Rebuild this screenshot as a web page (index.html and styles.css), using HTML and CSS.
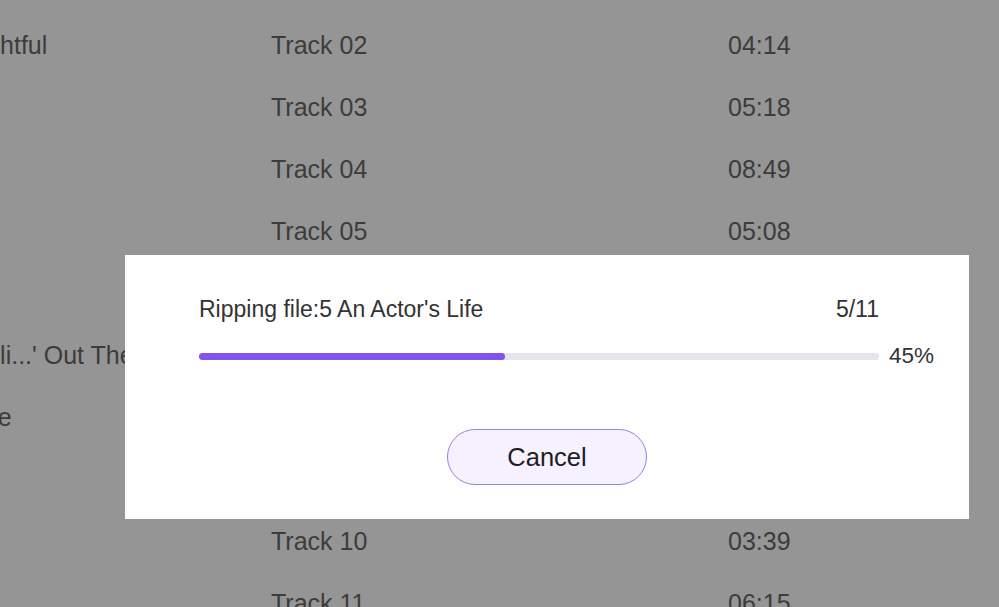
FILE: index.html
```html
<!DOCTYPE html>
<html lang="en">
<head>
    <meta charset="UTF-8">
    <meta name="viewport" content="width=device-width, initial-scale=1.0">
    <title>Rip CD</title>
    <link rel="stylesheet" href="styles.css">
</head>
<body>
    <div id="track-list">
        <div class="track-row"><span class="name">Frightful</span><span class="track">Track 02</span><span class="time">04:14</span></div>
        <div class="track-row"><span class="name"></span><span class="track">Track 03</span><span class="time">05:18</span></div>
        <div class="track-row"><span class="name"></span><span class="track">Track 04</span><span class="time">08:49</span></div>
        <div class="track-row"><span class="name"></span><span class="track">Track 05</span><span class="time">05:08</span></div>
        <div class="track-row"><span class="name"></span><span class="track">Track 06</span><span class="time">04:41</span></div>
        <div class="track-row"><span class="name">Feeli...' Out There</span><span class="track">Track 07</span><span class="time">03:27</span></div>
        <div class="track-row"><span class="name">Time</span><span class="track">Track 08</span><span class="time">02:56</span></div>
        <div class="track-row"><span class="name"></span><span class="track">Track 09</span><span class="time">04:02</span></div>
        <div class="track-row"><span class="name"></span><span class="track">Track 10</span><span class="time">03:39</span></div>
        <div class="track-row"><span class="name"></span><span class="track">Track 11</span><span class="time">06:15</span></div>
    </div>

    <div id="rip-dialog">
        <div class="rip-head">
            <span>Ripping file:5 An Actor's Life</span>
            <span>5/11</span>
        </div>
        <div class="rip-progress">
            <div class="bar"><div class="fill" style="width: 45%"></div></div>
            <span class="percent">45%</span>
        </div>
        <button id="cancel-rip">Cancel</button>
    </div>
</body>
</html>
```

FILE: styles.css
```css
body {
    margin: 0;
    padding: 0;
    background-color: #959595;
    font-family: "Liberation Sans", Arial, sans-serif;
    overflow: hidden;
    height: 607px;
    position: relative;
}

#track-list {
    padding-top: 14px;
    margin-left: -43px;
}

.track-row {
    display: grid;
    grid-template-columns: 314px 457px 1fr;
    height: 62px;
    align-items: center;
    font-size: 25px;
    color: #3c3c3c;
    white-space: nowrap;
}

.track-row .name {
    overflow: hidden;
}

#rip-dialog {
    position: absolute;
    left: 125px;
    top: 255px;
    width: 844px;
    height: 264px;
    box-sizing: border-box;
    padding: 41px 0 0 74px;
    background: #fefefe;
    display: flex;
    flex-direction: column;
}

.rip-head {
    display: flex;
    justify-content: space-between;
    width: 680px;
    font-size: 23px;
    color: #333;
}

.rip-progress {
    display: flex;
    align-items: center;
    gap: 10px;
    margin-top: 20px;
    font-size: 22.5px;
    color: #333;
}

.bar {
    width: 680px;
    height: 7px;
    border-radius: 4px;
    background: #e4e6eb;
}

.fill {
    height: 100%;
    border-radius: 4px;
    background: #8152ee;
}

#cancel-rip {
    align-self: flex-start;
    margin: 60px 0 0 248px;
    width: 200px;
    height: 56px;
    border: 1.5px solid #9a80d8;
    border-radius: 28px;
    background: #f6f1ff;
    font-family: "Liberation Sans", Arial, sans-serif;
    font-size: 25.5px;
    color: #1e1e1e;
    cursor: pointer;
}
```
